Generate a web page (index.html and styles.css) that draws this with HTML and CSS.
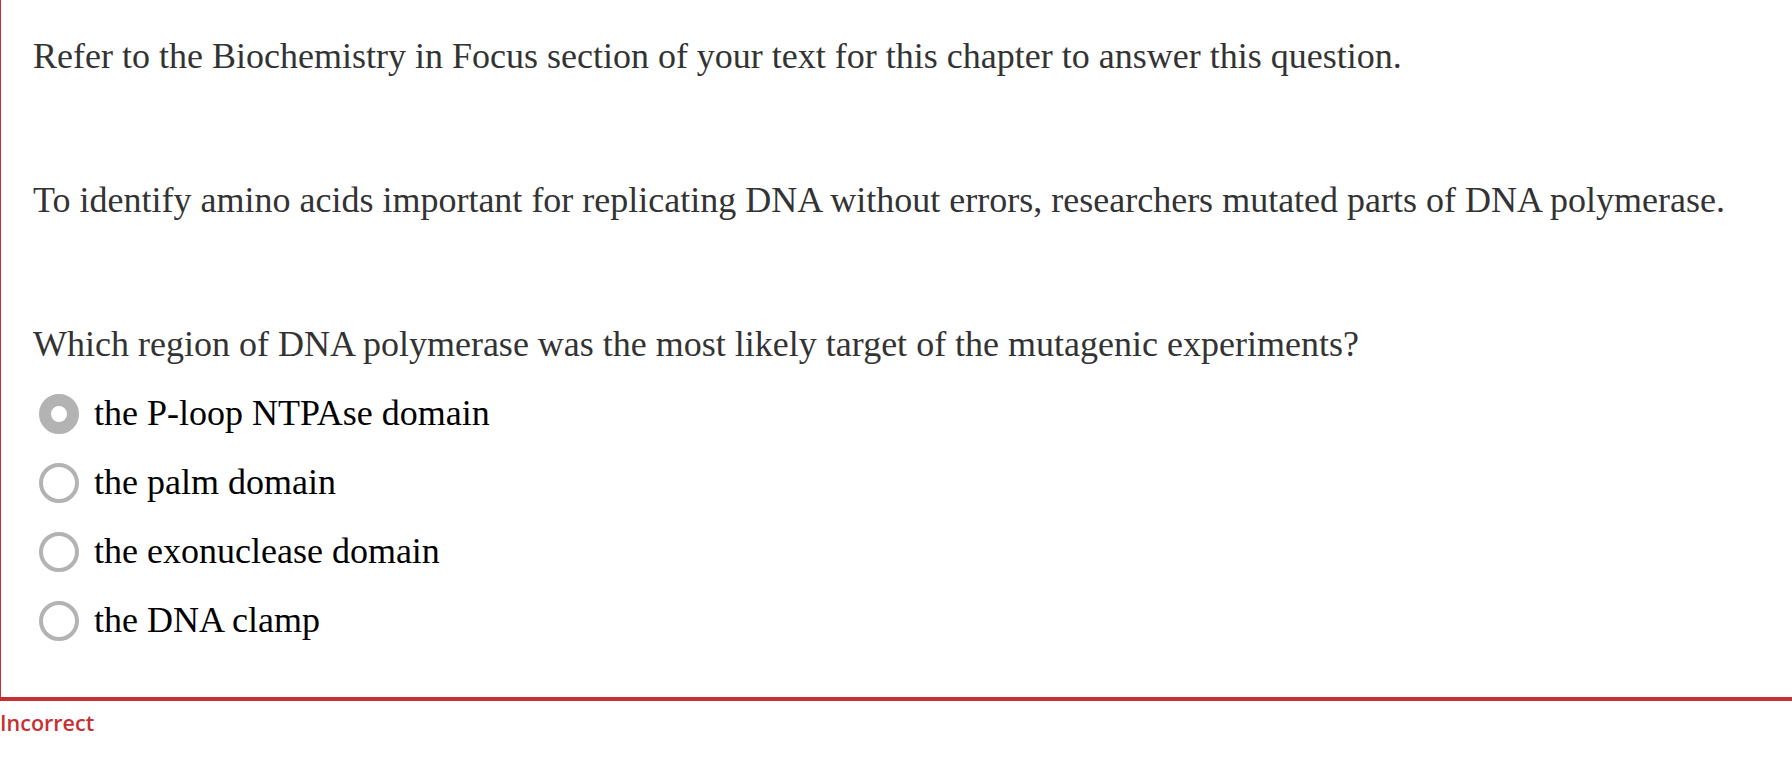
FILE: index.html
```html
<!DOCTYPE html>
<html lang="en">
<head>
<meta charset="utf-8">
<title>Question</title>
<link rel="stylesheet" href="styles.css">
</head>
<body>
<div class="question">
  <p class="stem">Refer to the Biochemistry in Focus section of your text for this chapter to answer this question.</p>
  <p class="stem">To identify amino acids important for replicating DNA without errors, researchers mutated parts of DNA polymerase.</p>
  <p class="stem last">Which region of DNA polymerase was the most likely target of the mutagenic experiments?</p>
  <div class="options">
    <label class="option"><input type="radio" name="q" class="radio" checked><span>the P-loop NTPAse domain</span></label>
    <label class="option"><input type="radio" name="q" class="radio"><span>the palm domain</span></label>
    <label class="option"><input type="radio" name="q" class="radio"><span>the exonuclease domain</span></label>
    <label class="option"><input type="radio" name="q" class="radio"><span>the DNA clamp</span></label>
  </div>
</div>
<div class="feedback">Incorrect</div>
</body>
</html>
```

FILE: styles.css
```css
html, body {
  margin: 0;
  padding: 0;
  background: #fff;
}

.question {
  border-left: 1px solid #c62f33;
  border-bottom: 4px solid #c62f33;
  padding: 36px 0 42px 32px;
  font-family: "Liberation Serif", "Times New Roman", serif;
  font-size: 36px;
  line-height: 41px;
}

.stem {
  margin: 0 0 103px 0;
  color: #333;
  white-space: nowrap;
}

.stem.last {
  margin-bottom: 14px;
}

.options {
  display: flex;
  flex-direction: column;
}

.option {
  display: flex;
  align-items: center;
  height: 69px;
  color: #000;
}

.radio {
  appearance: none;
  -webkit-appearance: none;
  box-sizing: border-box;
  width: 40px;
  height: 40px;
  margin: 0 15px 0 6px;
  border: 4px solid #b3b3b3;
  border-radius: 50%;
  background: #fff;
  flex: none;
}

.radio:checked {
  border-width: 12px;
}

.feedback {
  margin-top: 7px;
  font-family: "Open Sans", "Liberation Sans", sans-serif;
  font-weight: 600;
  font-size: 21.5px;
  line-height: 30px;
  color: #c62f33;
}
```
